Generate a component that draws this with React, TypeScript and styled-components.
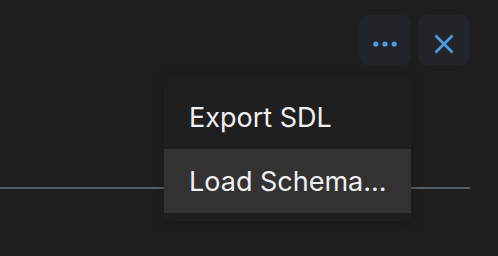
import styled, { createGlobalStyle } from "styled-components";

const GlobalStyle = createGlobalStyle`
  html, body {
    margin: 0;
    padding: 0;
    background: #1e1e1f;
    font-family: Inter, "Noto Sans", sans-serif;
  }
`;

export default function App() {
  return (
    <Page>
      <GlobalStyle />
      <Toolbar>
        <IconButton aria-label="More">
          <svg width="24" height="8" viewBox="0 0 24 8">
            <circle cx="2.8" cy="4" r="2.6" fill="#4a9de3" />
            <circle cx="12" cy="4" r="2.6" fill="#4a9de3" />
            <circle cx="21.2" cy="4" r="2.6" fill="#4a9de3" />
          </svg>
        </IconButton>
        <IconButton aria-label="Close">
          <svg width="20" height="20" viewBox="0 0 20 20">
            <path
              d="M1.5 1.5 L18.5 18.5 M18.5 1.5 L1.5 18.5"
              stroke="#4a9de3"
              strokeWidth="2.6"
              fill="none"
            />
          </svg>
        </IconButton>
      </Toolbar>
      <Divider />
      <Menu>
        <MenuItem>Export SDL</MenuItem>
        <MenuItem $active>Load Schema...</MenuItem>
      </Menu>
    </Page>
  );
}

const Page = styled.div`
  position: relative;
  width: 498px;
  height: 256px;
  overflow: hidden;
  background: #1e1e1f;
`;

const Toolbar = styled.div`
  display: flex;
  justify-content: flex-end;
  gap: 8px;
  padding: 15px 29px 0 0;
`;

const IconButton = styled.button`
  width: 51px;
  height: 50px;
  border: none;
  border-radius: 8px;
  background: #212428;
  display: flex;
  align-items: center;
  justify-content: center;
  padding: 7px 0 0;
`;

const Divider = styled.div`
  height: 2px;
  margin: 122px 28px 0 0;
  background: #575c61;
`;

const Menu = styled.div`
  position: absolute;
  top: 77px;
  left: 164px;
  width: 247px;
  padding: 8px 0;
  background: #1f1f20;
  border-radius: 4px;
  box-shadow: 0 2px 8px rgba(0, 0, 0, 0.2);
`;

const MenuItem = styled.div<{ $active?: boolean }>`
  height: 64px;
  display: flex;
  align-items: center;
  padding-left: 25px;
  font-size: 27px;
  font-weight: 400;
  color: #f0f0f0;
  background: ${(p) => (p.$active ? "#333233" : "transparent")};
`;
